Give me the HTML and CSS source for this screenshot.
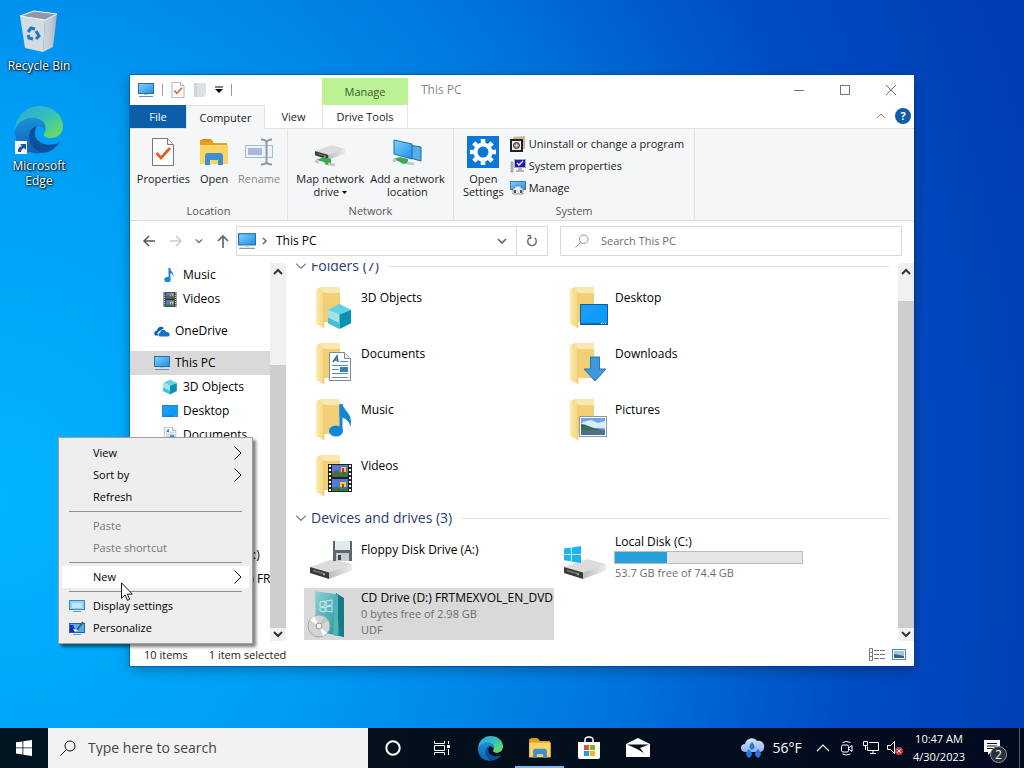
FILE: index.html
```html
<!DOCTYPE html>
<html lang="en">
<head>
    <meta charset="UTF-8">
    <meta name="viewport" content="width=device-width, initial-scale=1.0">
    <title>This PC</title>
    <link rel="stylesheet" href="styles.css">
</head>
<body>
    <!-- shared icons -->
    <svg class="sprite" aria-hidden="true">
        <defs>
            <linearGradient id="g-screen" x1="0" y1="0" x2="1" y2="1">
                <stop offset="0" stop-color="#7fd0ff"/><stop offset="1" stop-color="#1e90e6"/>
            </linearGradient>
            <linearGradient id="g-folder" x1="0" y1="0" x2="1" y2="0">
                <stop offset="0" stop-color="#fdebb0"/><stop offset="1" stop-color="#f6d47c"/>
            </linearGradient>
            <linearGradient id="g-drive" x1="0" y1="0" x2="1" y2="0">
                <stop offset="0" stop-color="#bdbdbd"/><stop offset="1" stop-color="#ececec"/>
            </linearGradient>
            <linearGradient id="g-edge1" x1="0" y1="0" x2="1" y2="1">
                <stop offset="0" stop-color="#2aa5dc"/><stop offset=".5" stop-color="#34c1ba"/><stop offset="1" stop-color="#79e34c"/>
            </linearGradient>
            <linearGradient id="g-edge2" x1="0" y1="0" x2="0" y2="1">
                <stop offset="0" stop-color="#1c8fd8"/><stop offset="1" stop-color="#0b62b4"/>
            </linearGradient>
            <linearGradient id="g-bin" x1="0" y1="0" x2="1" y2="0">
                <stop offset="0" stop-color="#cfd6de"/><stop offset=".6" stop-color="#bfc8d1"/><stop offset="1" stop-color="#a3afbc"/>
            </linearGradient>
            <linearGradient id="g-case" x1="0" y1="0" x2="1" y2="1">
                <stop offset="0" stop-color="#8fd3d6"/><stop offset="1" stop-color="#1f8f98"/>
            </linearGradient>
            <linearGradient id="g-cloud" x1="0" y1="0" x2="0" y2="1">
                <stop offset="0" stop-color="#d6e4fb"/><stop offset="1" stop-color="#8fb1ea"/>
            </linearGradient>
        </defs>
        <symbol id="i-pc" viewBox="0 0 16 16">
            <rect x=".5" y="1.5" width="15" height="10" fill="url(#g-screen)" stroke="#2f6f9f"/>
            <path d="M6 12h4v1H6z" fill="#9fc4dc"/><path d="M1 14.5h14" stroke="#5f95b8"/>
        </symbol>
        <symbol id="i-note" viewBox="0 0 16 16">
            <path d="M7.500 1v10.500" stroke="#1583d8" stroke-width="2"/><ellipse cx="5.500" cy="12.500" rx="3.200" ry="2.600" fill="#1583d8"/>
            <path d="M7 1c1 3 5 3.500 4.500 8.500C11 7 9 6 7 5.500z" fill="#1583d8"/>
        </symbol>
        <symbol id="i-film" viewBox="0 0 24 28">
            <rect width="24" height="28" fill="#222"/>
            <path d="M2 1v26M22 1v26" stroke="#fff" stroke-width="2" stroke-dasharray="2 2"/>
            <path d="M4 1h16v12H4zM4 15h16v12H4z" fill="#5578d8"/>
            <path d="M4 9l5-3 4 3 3-2 4 2v4H4zM4 24l6-1 3 2 7-2v4H4z" fill="#2f7a3c"/>
            <path d="M13 3h5v5h-5zM12 18h6v5h-6z" fill="#f1d21c"/><path d="M14 4h2v6h-2zM6 8h3v3H6zM14 20h2v4h-2z" fill="#c72b3c"/>
        </symbol>
        <symbol id="i-cloud" viewBox="0 0 16 16">
            <path d="M1 12.500C-.8 10 1 7.500 3 7.500 3.500 4 7.500 2.500 9.800 5.200L4.500 8.800c-1.500 1-1 3.200.5 3.700z" fill="#0d62b5"/>
            <path d="M6 13.500c-2-.5-2-3 0-3.800C6.500 6.500 11 5.500 12.300 9c4 0 4.500 4 1.700 4.500z" fill="#1773c9"/>
        </symbol>
        <symbol id="i-cube" viewBox="0 0 26 28">
            <path d="M1 7L13 1l12 6-12 5z" fill="#5fd3e6"/><path d="M1 7l12 5v15L1 21z" fill="#9fe3ee"/><path d="M25 7l-12 5v15l12-6z" fill="#0c91b5"/>
            <path d="M1 15l12 6v6L1 21z" fill="#48bcd4"/>
        </symbol>
        <symbol id="i-desk" viewBox="0 0 28 21">
            <rect x=".5" y=".5" width="27" height="20" fill="#1b9bf3" stroke="#0d5f9c"/><path d="M1 20L20 1h7v19z" fill="#109af8"/>
            <path d="M1 19.500h26" stroke="#0b6fb8"/><path d="M21 19.500h6" stroke="#fff" stroke-dasharray="1 1"/>
        </symbol>
        <symbol id="i-doc" viewBox="0 0 22 29">
            <path d="M.5.500h15l6 6v22H.5z" fill="#fff" stroke="#7d8b95"/><path d="M15.500.500v6h6" fill="#e5eaee" stroke="#7d8b95"/>
            <path d="M4 10l4-6 1 6M5 8h4" fill="none" stroke="#2b6cb0" stroke-width="1.500"/>
            <path d="M11 9.500h8M3 13.500h16M3 17.500h7M3 21.500h16M3 25.500h16" stroke="#4d8fc4"/><path d="M11 15h8v5h-8z" fill="#3d7eb0"/>
        </symbol>
        <symbol id="i-arrow" viewBox="0 0 24 26">
            <path d="M7.500 1h9v12h6.500L12 25 1 13h6.500z" fill="#3f97e0" stroke="#2374b8"/>
        </symbol>
        <symbol id="i-photo" viewBox="0 0 28 21">
            <rect x=".5" y=".5" width="27" height="20" fill="#fff" stroke="#8e979e"/><path d="M2 2h24v17H2z" fill="#6fa4e6"/>
            <path d="M4 6l8-2 7 3 7-2v7H2V8z" fill="#d9ecfa"/><path d="M2 8c6 0 11 5 24 6H2z" fill="#3b6c50"/><path d="M2 14h24v5H2z" fill="#4a6f90"/>
        </symbol>
        <symbol id="i-folder" viewBox="0 0 26 44">
            <path d="M4 3h21v34H7z" fill="#f1cf76"/><path d="M4 2h21v6H8z" fill="#f9e7b2"/><path d="M1 3l8 4v36L1 39z" fill="url(#g-folder)"/><path d="M9 8v35" stroke="#e6c46e" stroke-width=".7"/>
        </symbol>
        <symbol id="i-drive" viewBox="0 0 42 20">
            <path d="M0 8L23 0l19 5-23 9z" fill="#dcdcdc"/><path d="M0 8l19 5.500V20L0 14z" fill="#3a3a3a"/><path d="M19 13.500L42 5v6.500L19 20z" fill="url(#g-drive)"/>
            <path d="M3 11.500l12 3.500" stroke="#777" stroke-width="1.500"/><path d="M13 15.500h2" stroke="#6d6" stroke-width="1.500"/>
        </symbol>
        <symbol id="i-check" viewBox="0 0 22 28">
            <path d="M.5.500h15l6 6v21H.5z" fill="#fff" stroke="#777"/><path d="M15.500.500v6h6" fill="#eee" stroke="#777"/>
            <path d="M4.500 15l4.500 5 9-10" fill="none" stroke="#e0601c" stroke-width="2.800"/>
        </symbol>
        <symbol id="i-explorer" viewBox="0 0 28 26">
            <path d="M0 1h11l3 3h13v21H0z" fill="#e0a21f"/><path d="M0 6h28v19H0z" fill="#fcd462"/><path d="M2 0h9l2 3H2z" fill="#d9941a"/>
            <path d="M5 26v-9q0-3 3-3h12q3 0 3 3v9h-5v-5h-8v5z" fill="#3e8ed0"/>
        </symbol>
        <symbol id="i-edge" viewBox="0 0 48 48">
            <path d="M0 24C1 9 12 0 24 0c14 0 24 9 24 20 0 8-6 12-12 12-5 0-8-2-7-4 3-4 1-13-8-14C11 13 3 18 0 24z" fill="url(#g-edge1)"/>
            <path d="M0 24c3-8 11-13 20-12 9 1 12 8 10 13-1-4-6-6-9-5-9 3-8 22 6 27C11 50-1 38 0 24z" fill="url(#g-edge2)"/>
            <path d="M15 26c-3 9 3 19 13 21 8-1 13-5 17-11-8 5-20 3-24-4-2-4-1-9 1-12-4 1-6 3-7 6z" fill="#0c4f9c"/>
        </symbol>
        <symbol id="i-win" viewBox="0 0 16 16">
            <path d="M0 2.300l6.500-.9v6.100H0zM7.300 1.300L16 0v7.500H7.300zM0 8.300h6.500v6.100L0 13.500zM7.300 8.300H16V16l-8.700-1.200z" fill="currentColor"/>
        </symbol>
        <symbol id="i-lens" viewBox="0 0 16 16">
            <circle cx="10" cy="6" r="5" fill="none" stroke="currentColor"/><path d="M6.500 9.500L.5 15.500" stroke="currentColor"/>
        </symbol>
        <symbol id="i-up" viewBox="0 0 10 10"><path d="M1 7l4-4 4 4" fill="none" stroke="currentColor"/></symbol>
        <symbol id="i-down" viewBox="0 0 10 10"><path d="M1 3l4 4 4-4" fill="none" stroke="currentColor"/></symbol>
        <symbol id="i-right" viewBox="0 0 10 16"><path d="M1.500 1.500L8 8l-6.500 6.500" fill="none" stroke="currentColor"/></symbol>
    </svg>

    <main class="desktop">
        <div class="shortcuts">
            <a class="shortcut" href="#">
                <svg width="40" height="44" viewBox="0 0 40 44">
                    <path d="M1 6L15 1l22 3-11 6z" fill="#8d9aa6"/>
                    <path d="M1 6l25 4-2 32L6 38z" fill="#d3dbe3"/><path d="M26 10L38 4l-4 33-10 5z" fill="url(#g-bin)"/>
                    <path d="M1 6L15 1l23 3-12 6z" fill="none" stroke="#f5f8fb"/>
                    <path d="M9 22l3-4 4 1M17 21l3 5-3 3M14 29l-4-1-1-3" fill="none" stroke="#1d78c4" stroke-width="3"/>
                </svg>
                <span>Recycle Bin</span>
            </a>
            <a class="shortcut" href="#">
                <svg width="48" height="48" viewBox="0 0 48 48">
                    <use href="#i-edge"/>
                    <rect y="35" width="12" height="13" fill="#f8f8f8"/><path d="M3 46c0-4 1-5 4-6l-2-2h6v6l-2-2c-2 1-3 2-3 4z" fill="#23529c"/>
                </svg>
                <span>Microsoft<br>Edge</span>
            </a>
        </div>

        <section class="window">
            <header class="titlebar">
                <div class="quick">
                    <svg width="16" height="16"><use href="#i-pc"/></svg>
                    <i class="bar"></i>
                    <button aria-label="Properties"><svg width="14" height="16"><use href="#i-check"/></svg></button>
                    <button aria-label="New folder"><svg width="14" height="16" viewBox="0 0 14 16"><path d="M1 1h12v11l-2 3H1z" fill="#dde1e6"/><path d="M1 1h3v14H1z" fill="#ccd4dc"/></svg></button>
                    <button aria-label="Customize"><svg width="8" height="8" viewBox="0 0 8 8"><path d="M0 1h8" stroke="#000"/><path d="M0 3h8L4 7z"/></svg></button>
                    <i class="bar"></i>
                </div>
                <div class="manage">Manage</div>
                <h1>This PC</h1>
                <div class="controls">
                    <button aria-label="Minimize"><svg width="12" height="12" viewBox="0 0 12 12"><path d="M1 6.500h10" stroke="currentColor"/></svg></button>
                    <button aria-label="Maximize"><svg width="12" height="12" viewBox="0 0 12 12"><rect x="1.500" y="1.500" width="9" height="9" fill="none" stroke="currentColor"/></svg></button>
                    <button aria-label="Close"><svg width="12" height="12" viewBox="0 0 12 12"><path d="M1 1l10 10M11 1L1 11" stroke="currentColor"/></svg></button>
                </div>
            </header>
            <nav class="tabs">
                <button class="tab file">File</button>
                <button class="tab active">Computer</button>
                <button class="tab view">View</button>
                <button class="tab tools">Drive Tools</button>
                <button class="fold" aria-label="Collapse ribbon"><svg width="10" height="10"><use href="#i-up"/></svg></button>
                <button class="help" aria-label="Help">?</button>
            </nav>

            <div class="ribbon">
                <div class="group location">
                    <div class="tools-row">
                        <button class="big"><svg width="32" height="32" viewBox="0 0 32 32"><use href="#i-check" x="5" y="2" width="22" height="28"/></svg>Properties</button>
                        <button class="big"><svg width="32" height="32" viewBox="0 0 32 32"><use href="#i-explorer" x="2" y="3" width="28" height="26"/></svg>Open</button>
                        <button class="big off"><svg width="32" height="32" viewBox="0 0 32 32">
                            <rect x="2.500" y="9.500" width="27" height="12" fill="#eef2fa" stroke="#a9b9d8"/><path d="M5 12h14v7H5z" fill="#a9b9d8"/>
                            <path d="M18 3.500q5 0 5.500 3 .5-3 5.500-3M23.500 5v21M18 28.500q5 0 5.500-3 .5 3 5.500 3" fill="none" stroke="#8e99aa" stroke-width="2"/></svg>Rename</button>
                    </div>
                    <div class="group-name">Location</div>
                </div>
                <div class="group network">
                    <div class="tools-row">
                        <button class="big"><svg width="32" height="32" viewBox="0 0 32 32"><use href="#i-drive" x="1" y="9" width="30" height="15"/><path d="M2 24l8-3 7 2v5l-5 1-2-3z" fill="#3ea655"/><path d="M1 25l4 1M14 28l7 1" stroke="#c8c8c8" stroke-width="3"/></svg>Map network<br>drive <svg class="caret" width="5" height="3" viewBox="0 0 5 3"><path d="M0 0h5L2.500 3z"/></svg></button>
                        <button class="big"><svg width="32" height="32" viewBox="0 0 32 32">
                            <path d="M12 8l18 3v14l-18-5z" fill="#55aee8" stroke="#1e6ca8"/><path d="M3 4l18 4v15L3 18z" fill="url(#g-screen)" stroke="#1e6ca8"/>
                            <path d="M2 23l7-2 8 2v4l-5 1-3-2z" fill="#3ea655"/><path d="M2 24l3 1M16 27l7 1" stroke="#c8c8c8" stroke-width="3"/></svg>Add a network<br>location</button>
                    </div>
                    <div class="group-name">Network</div>
                </div>
                <div class="group system">
                    <div class="tools-row">
                        <button class="big"><svg width="32" height="32" viewBox="0 0 32 32"><rect width="32" height="32" fill="#0b78d7"/>
                            <g transform="translate(16 16)" fill="none" stroke="#fff"><circle r="7.500" stroke-width="4"/>
                            <path d="M0-9v-4M0 9v4M-9 0h-4M9 0h4M-6.400-6.400l-2.800-2.800M6.400-6.400l2.800-2.800M-6.400 6.400l-2.800 2.800M6.400 6.400l2.800 2.800" stroke-width="4.500"/></g></svg>Open<br>Settings</button>
                        <div class="small-list">
                            <button class="small"><svg width="16" height="16" viewBox="0 0 16 16"><path d="M3 1l12-1v12l-4 3H3z" fill="#cbb78f"/><rect x="1" y="4" width="11" height="11" fill="#eee" stroke="#222" stroke-width="2"/><circle cx="6.500" cy="9.500" r="3" fill="#999" stroke="#333"/><circle cx="6.500" cy="9.500" r="1" fill="#fff"/></svg>Uninstall or change a program</button>
                            <button class="small"><svg width="16" height="16" viewBox="0 0 16 16"><path d="M1 4h2v10H1z" fill="#bbb" stroke="#888" stroke-width=".6"/><rect x="4.500" y="1.500" width="11" height="8" fill="#2019b4" stroke="#aaa"/><path d="M7 5l2 2 4-4" fill="none" stroke="#fff" stroke-width="1.300"/><path d="M8 10h4v2h2v2H6v-2h2z" fill="#b5b5b5"/></svg>System properties</button>
                            <button class="small"><svg width="16" height="16" viewBox="0 0 16 16"><rect x=".5" y="1.500" width="15" height="8" fill="url(#g-screen)" stroke="#3a81b2"/><path d="M5 8V6h6v2h2v6H3V8z" fill="#e4e8ec" stroke="#777" stroke-width=".7"/><path d="M5 10v3M11 10v3" stroke="#222" stroke-width="1.500"/></svg>Manage</button>
                        </div>
                    </div>
                    <div class="group-name">System</div>
                </div>
            </div>

            <div class="address-row">
                <div class="history">
                    <button aria-label="Back"><svg width="14" height="14" viewBox="0 0 14 14"><path d="M13 7H2M7 2L2 7l5 5" fill="none" stroke="#555" stroke-width="1.500"/></svg></button>
                    <button aria-label="Forward" disabled><svg width="14" height="14" viewBox="0 0 14 14"><path d="M1 7h11M7 2l5 5-5 5" fill="none" stroke="#ccc" stroke-width="1.500"/></svg></button>
                    <button aria-label="Recent"><svg width="8" height="8" viewBox="0 0 10 10"><path d="M1 3l4 4 4-4" fill="none" stroke="#777" stroke-width="1.700"/></svg></button>
                    <button aria-label="Up"><svg width="14" height="14" viewBox="0 0 14 14"><path d="M7 14V2M2 7l5-5 5 5" fill="none" stroke="#666" stroke-width="1.700"/></svg></button>
                </div>
                <div class="address">
                    <svg width="18" height="18"><use href="#i-pc"/></svg>
                    <svg width="6" height="8" viewBox="0 0 6 8"><path d="M1 1l3 3-3 3" fill="none" stroke="#666" stroke-width="1.500"/></svg>
                    <button class="crumb">This PC</button>
                    <button class="drop" aria-label="Previous locations"><svg width="10" height="10" viewBox="0 0 10 10"><path d="M1 3l4 4 4-4" fill="none" stroke="#666" stroke-width="1.700"/></svg></button>
                    <button class="refresh" aria-label="Refresh"><svg width="12" height="12" viewBox="0 0 12 12"><path d="M8.500 2.800A4.300 4.300 0 1 1 3.800 2.600" fill="none" stroke="#666" stroke-width="1.400"/><path d="M4.500 .7h-3M4.700.500v3.500" fill="none" stroke="#666" stroke-width="1.300"/></svg></button>
                </div>
                <label class="search"><svg width="14" height="14"><use href="#i-lens"/></svg><input type="text" placeholder="Search This PC" aria-label="Search This PC"></label>
            </div>

            <div class="panes">
                <div class="tree-pane">
                    <ul class="tree">
                        <li class="sub"><svg width="16" height="16"><use href="#i-note"/></svg>Music</li>
                        <li class="sub"><svg width="16" height="15"><use href="#i-film"/></svg>Videos</li>
                        <li class="top"><svg width="16" height="16"><use href="#i-cloud"/></svg>OneDrive</li>
                        <li class="top current"><svg width="16" height="16"><use href="#i-pc"/></svg>This PC</li>
                        <li class="sub"><svg width="16" height="16"><use href="#i-cube"/></svg>3D Objects</li>
                        <li class="sub"><svg width="16" height="12"><use href="#i-desk"/></svg>Desktop</li>
                        <li class="sub"><svg width="16" height="16"><use href="#i-doc"/></svg>Documents</li>
                        <li class="sub"><svg width="16" height="16"><use href="#i-arrow"/></svg>Downloads</li>
                        <li class="sub"><svg width="16" height="16"><use href="#i-note"/></svg>Music</li>
                        <li class="sub"><svg width="16" height="12"><use href="#i-photo"/></svg>Pictures</li>
                        <li class="sub"><svg width="16" height="16"><use href="#i-film"/></svg>Videos</li>
                        <li class="sub"><svg width="16" height="12"><use href="#i-drive"/></svg>Local Disk (C:)</li>
                        <li class="sub"><svg width="16" height="12"><use href="#i-drive"/></svg>CD Drive (D:) FRTMEXVOL_EN_DVD</li>
                    </ul>
                    <div class="scroll scroll-tree"><svg width="10" height="10"><use href="#i-up"/></svg><i></i><svg width="10" height="10"><use href="#i-down"/></svg></div>
                </div>
                <div class="list-pane">
                    <div class="list">
                        <h2><svg width="12" height="12"><use href="#i-down"/></svg>Folders (7)</h2>
                        <div class="items">
                            <div class="item"><svg width="48" height="48" viewBox="0 0 48 48"><use href="#i-folder" x="9" y="3" width="26" height="44"/><use href="#i-cube" x="20" y="21" width="27" height="27"/></svg><div class="name">3D Objects</div></div>
                            <div class="item"><svg width="48" height="48" viewBox="0 0 48 48"><use href="#i-folder" x="9" y="3" width="26" height="44"/><use href="#i-desk" x="20" y="22" width="28" height="21"/></svg><div class="name">Desktop</div></div>
                            <div class="item"><svg width="48" height="48" viewBox="0 0 48 48"><use href="#i-folder" x="9" y="3" width="26" height="44"/><use href="#i-doc" x="23" y="14" width="22" height="29"/></svg><div class="name">Documents</div></div>
                            <div class="item"><svg width="48" height="48" viewBox="0 0 48 48"><use href="#i-folder" x="9" y="3" width="26" height="44"/><use href="#i-arrow" x="23" y="18" width="24" height="26"/></svg><div class="name">Downloads</div></div>
                            <div class="item"><svg width="48" height="48" viewBox="0 0 48 48"><use href="#i-folder" x="9" y="3" width="26" height="44"/><path d="M35 11v26" stroke="#1187d8" stroke-width="3"/><ellipse cx="30" cy="37" rx="7" ry="5.500" fill="#1187d8"/><path d="M33.500 10h3c1 7 11 9 8 23-1-6-5-9-11-10z" fill="#1187d8"/></svg><div class="name">Music</div></div>
                            <div class="item"><svg width="48" height="48" viewBox="0 0 48 48"><use href="#i-folder" x="9" y="3" width="26" height="44"/><use href="#i-photo" x="19" y="22" width="28" height="21"/></svg><div class="name">Pictures</div></div>
                            <div class="item"><svg width="48" height="48" viewBox="0 0 48 48"><use href="#i-folder" x="9" y="3" width="26" height="44"/><use href="#i-film" x="22" y="14" width="24" height="28"/></svg><div class="name">Videos</div></div>
                        </div>
                        <h2><svg width="12" height="12"><use href="#i-down"/></svg>Devices and drives (3)</h2>
                        <div class="items">
                            <div class="item"><svg width="48" height="48" viewBox="0 0 48 48"><use href="#i-drive" x="4" y="25" width="42" height="20"/><path d="M27 7h19v20H27z" fill="#5b666f"/><path d="M29 7h15v9H29z" fill="#dfe9ee"/><path d="M30 19h13v8H30z" fill="#c7ccd0"/><path d="M32 21h3v5h-3z" fill="#444"/></svg><div class="name">Floppy Disk Drive (A:)</div></div>
                            <div class="item wide"><svg width="48" height="48" viewBox="0 0 48 48"><use href="#i-drive" x="4" y="25" width="42" height="20"/><use href="#i-win" x="4" y="12" width="17" height="17" color="#1cb4ee"/></svg>
                                <div class="info">
                                    <div class="name">Local Disk (C:)</div>
                                    <div class="usage"><i style="width: 28%"></i></div>
                                    <div class="note">53.7 GB free of 74.4 GB</div>
                                </div>
                            </div>
                            <div class="item wide selected"><svg width="48" height="48" viewBox="0 0 48 48">
                                <path d="M30 3l8 5v39l-10-2z" fill="#177983"/><path d="M9 1l20 3 5 42-24-5z" fill="url(#g-case)"/><path d="M29 4l3 1v41l-5-1z" fill="#51b3b7"/>
                                <path d="M14 12l5-1v5l-5 1zM20 11l6-1v5l-6 1zM14 18l5-1v5l-5-1zM20 17l6-1v6l-6-1z" fill="none" stroke="#c6ecec"/>
                                <circle cx="13" cy="36" r="11" fill="#d3d5d6" stroke="#a5a8aa"/><path d="M13 36l-9-6 4-4zM13 36l8 7-4 3z" fill="#fff"/><path d="M13 36l9-5-4-4z" fill="#b6cdb9"/><circle cx="13" cy="36" r="3" fill="#f5f5f5" stroke="#999"/></svg>
                                <div class="info">
                                    <div class="name">CD Drive (D:) FRTMEXVOL_EN_DVD</div>
                                    <div class="note">0 bytes free of 2.98 GB</div>
                                    <div class="note">UDF</div>
                                </div>
                            </div>
                        </div>
                    </div>
                    <div class="scroll scroll-list"><svg width="10" height="10"><use href="#i-up"/></svg><i></i><svg width="10" height="10"><use href="#i-down"/></svg></div>
                </div>
            </div>

            <footer class="status">
                <span>10 items</span>
                <span>1 item selected</span>
                <div class="modes">
                    <button aria-label="Details"><svg width="16" height="13" viewBox="0 0 16 13"><path d="M.5.500h3v12h-3zM.5 4.500h3M.5 8.500h3" fill="none" stroke="#777"/><path d="M5 2.500h11M5 6.500h11M5 10.500h11" stroke="#777" stroke-dasharray="5 1"/></svg></button>
                    <button aria-label="Large icons"><svg width="14" height="11" viewBox="0 0 14 11"><rect x=".5" y=".5" width="13" height="10" fill="#fff" stroke="#4a88b5"/><path d="M2 2h10v7H2z" fill="#9cc7e6"/><path d="M2 5l10 2v2H2z" fill="#3b5f78"/></svg></button>
                </div>
            </footer>
        </section>

        <div class="menu">
            <button>View<svg class="more" width="10" height="16"><use href="#i-right"/></svg></button>
            <button>Sort by<svg class="more" width="10" height="16"><use href="#i-right"/></svg></button>
            <button>Refresh</button>
            <hr>
            <button disabled>Paste</button>
            <button disabled>Paste shortcut</button>
            <hr>
            <button class="hover">New<svg class="more" width="10" height="16"><use href="#i-right"/></svg></button>
            <hr>
            <button><svg class="pic" width="16" height="16" viewBox="0 0 16 16"><rect x=".5" y="2.500" width="15" height="9" fill="#8fd0f4" stroke="#3b86b5"/><path d="M3 5h10v5H3z" fill="#bfe6fb"/><path d="M4 13.500h8" stroke="#5c9cc2"/></svg>Display settings</button>
            <button><svg class="pic" width="16" height="16" viewBox="0 0 16 16"><rect x=".5" y="3.500" width="15" height="9" fill="#4bb0ef" stroke="#24629a"/><path d="M1 5h3l3 7H1z" fill="#241cd0"/><path d="M8 10l6-8" fill="none" stroke="#555" stroke-width="2"/><path d="M4 9l5 1-3 2z" fill="#fff"/><path d="M4 14.500h8" stroke="#5c9cc2"/></svg>Personalize</button>
        </div>
        <svg class="pointer" width="12" height="19" viewBox="0 0 12 19"><path d="M.5.800v15.500l3.600-3.400 2.400 5.400 2.200-1-2.400-5.200h5z" fill="#fff" stroke="#000" stroke-width=".9"/></svg>
    </main>

    <footer class="taskbar">
        <button class="start" aria-label="Start"><svg width="16" height="16"><use href="#i-win"/></svg></button>
        <label class="task-search"><svg width="16" height="16"><use href="#i-lens"/></svg><input type="text" placeholder="Type here to search" aria-label="Type here to search"></label>
        <div class="apps">
            <button aria-label="Cortana"><svg width="16" height="16" viewBox="0 0 16 16"><circle cx="8" cy="8" r="6.700" fill="none" stroke="#fff" stroke-width="2"/></svg></button>
            <button aria-label="Task View"><svg width="18" height="16" viewBox="0 0 18 16"><path d="M1.500 1v2.500h10V1M1.500 15v-2.500h10V15M1.500 5.500h10v5h-10zM15.500 1v3M15.500 9v6" fill="none" stroke="#fff"/><path d="M14 5h3v3h-3z" fill="#fff"/></svg></button>
            <button aria-label="Edge"><svg width="25" height="25"><use href="#i-edge"/></svg></button>
            <button class="open" aria-label="File Explorer"><svg width="22" height="20"><use href="#i-explorer"/></svg></button>
            <button aria-label="Store"><svg width="24" height="24" viewBox="0 0 24 24"><path d="M8 6V4q0-3 4-3t4 3v2" fill="none" stroke="#fff" stroke-width="1.500"/><path d="M1 6h22v15q0 2-2 2H3q-2 0-2-2z" fill="#fff"/><path d="M7 9h5v5H7z" fill="#e5502c"/><path d="M13 9h5v5h-5z" fill="#7db61c"/><path d="M7 15h5v5H7z" fill="#1c9fe5"/><path d="M13 15h5v5h-5z" fill="#f5b716"/></svg></button>
            <button aria-label="Mail"><svg width="24" height="20" viewBox="0 0 24 20"><path d="M0 6l12-6 12 6v13H0z" fill="#fff"/><path d="M1 6.500h22L14 10l4 5-7-4z" fill="#04121e"/></svg></button>
        </div>
        <div class="tray">
            <button class="weather"><svg width="26" height="22" viewBox="0 0 26 22"><path d="M5 15C-1 14 0 7 5 7 6 1 14-1 17 4c5-1 8 3 7 7 0 2-2 4-4 4z" fill="url(#g-cloud)"/><path d="M12 5q5 5 0 8-5-3 0-8zM9 12q6 6 0 9-6-3 0-9zM18 12q6 6 0 9-6-3 0-9z" fill="#2678dd"/></svg>56°F</button>
            <button aria-label="Show hidden icons"><svg width="14" height="14" viewBox="0 0 14 14"><path d="M1 10l6-6 6 6" fill="none" stroke="#fff" stroke-width="1.200"/></svg></button>
            <button aria-label="Meet Now"><svg width="14" height="16" viewBox="0 0 14 16"><rect x="1.500" y="5" width="7" height="7" rx="1.500" fill="none" stroke="#fff"/><path d="M8.500 8l3.500-2.500v6L8.500 9M2.500 2.500q4-2 8 0M2.500 14q4 2 8 0" fill="none" stroke="#fff"/></svg></button>
            <button aria-label="Network"><svg width="16" height="16" viewBox="0 0 16 16"><path d="M6 2.500h9.500v8H4.500V6.500M7 13.500h6M10 11v2.500M.5 1.500h4v4h-4zM2.500 6v4" fill="none" stroke="#fff"/></svg></button>
            <button aria-label="Volume"><svg width="16" height="16" viewBox="0 0 16 16"><path d="M.5 5.500h3l4-4v12l-4-4h-3z" fill="none" stroke="#fff"/><circle cx="12" cy="11" r="4" fill="#d4343c"/><path d="M10.200 9.200l3.600 3.600M13.800 9.200l-3.600 3.600" stroke="#fff"/></svg></button>
            <button class="clock">10:47 AM<br>4/30/2023</button>
            <button class="action" aria-label="Notifications"><svg width="18" height="18" viewBox="0 0 18 18"><path d="M0 1h16v12H7l-3 3v-3H0z" fill="#fff"/><path d="M3 4.500h10M3 7h10M3 9.500h6" stroke="#04101f"/></svg><span class="badge">2</span></button>
            <button class="peek" aria-label="Show desktop"></button>
        </div>
    </footer>
</body>
</html>
```
FILE: styles.css
```css
*{
    margin:0;
    padding:0;
    box-sizing:border-box;
}
body{
    height:100vh;
    display:flex;
    flex-direction:column;
    overflow:hidden;
    font:12px/16px "Open Sans", "Noto Sans", sans-serif;
    color:#000;
    background:radial-gradient(ellipse 1080px 1240px at 0 65%, #00b4ff 0, #009ef6 30%, #0076de 58%, #004cc4 80%, #003eb6 100%);
}
button{
    font:inherit;
    color:inherit;
    border:none;
    background:none;
}
input{
    font:inherit;
    border:none;
    outline:none;
    background:none;
    min-width:0;
    flex:1;
}
svg{
    flex:none;
}
.sprite{
    position:absolute;
    width:0;
    height:0;
}

/* desktop */
.desktop{
    flex:1;
    position:relative;
}
.shortcuts{
    width:78px;
    padding-top:10px;
    display:flex;
    flex-direction:column;
    gap:33px;
}
.shortcut{
    display:flex;
    flex-direction:column;
    align-items:center;
    gap:4px;
    color:#fff;
    line-height:15px;
    text-align:center;
    text-decoration:none;
    text-shadow:1px 1px 2px #000, 0 0 2px #000;
}

/* explorer window */
.window{
    position:absolute;
    top:75px;
    right:110px;
    bottom:62px;
    left:130px;
    display:flex;
    flex-direction:column;
    background:#fff;
    box-shadow:0 0 0 1px rgba(0,60,120,.4), 0 4px 12px rgba(0,0,0,.3);
}
.titlebar{
    height:30px;
    display:flex;
}
.quick{
    width:192px;
    padding:0 8px;
    display:flex;
    align-items:center;
    gap:8px;
}
.quick button{
    display:flex;
}
.bar{
    width:1px;
    height:12px;
    background:#999;
}
.manage{
    width:86px;
    margin-top:3px;
    font-size:11px;
    line-height:28px;
    text-align:center;
    background:#bdf294;
    color:#3c5c2c;
}
.titlebar h1{
    padding-left:13px;
    font-size:12px;
    font-weight:normal;
    line-height:30px;
    color:#888;
}
.controls{
    margin-left:auto;
    display:flex;
    color:#777;
}
.controls button{
    width:46px;
    display:flex;
    align-items:center;
    justify-content:center;
}
.tabs{
    height:24px;
    display:flex;
    border-bottom:1px solid #dfe1e3;
    font-size:11px;
    color:#222;
}
.tab{
    line-height:22px;
}
.file{
    width:56px;
    color:#fff;
    background:#0c5ea8;
}
.active{
    width:79px;
    height:24px;
    border:1px solid #dfe1e3;
    border-bottom:none;
    background:#f5f6f7;
}
.view{
    width:57px;
}
.tools{
    width:86px;
    border:1px solid #e0ecd8;
    border-width:0 1px;
}
.fold{
    margin-left:auto;
    width:28px;
    color:#888;
}
.help{
    width:16px;
    height:16px;
    margin:3px 3px 0 0;
    border-radius:50%;
    background:#0c5ea8;
    color:#fff;
    font-weight:bold;
    line-height:16px;
}

/* ribbon */
.ribbon{
    height:92px;
    display:flex;
    background:#f5f6f7;
    border-bottom:1px solid #dadbdc;
    font-size:11px;
    color:#222;
}
.group{
    display:flex;
    flex-direction:column;
    justify-content:space-between;
    padding:7px 0 1px;
    border-right:1px solid #e2e3e4;
}
.location{
    width:158px;
}
.network{
    width:166px;
}
.system{
    width:241px;
}
.tools-row{
    display:flex;
    justify-content:center;
    align-items:flex-start;
}
.big{
    padding:0 4px;
    line-height:13px;
    white-space:nowrap;
}
.big > svg:first-child{
    display:block;
    margin:0 auto 4px;
}
.big .caret{
    display:inline;
    margin-bottom:2px;
}
.network .big,
.system .big{
    padding:0 3px;
}
.off{
    color:#888;
}
.small-list{
    display:flex;
    flex-direction:column;
}
.small{
    height:22px;
    padding:0 4px 6px 3px;
    display:flex;
    align-items:center;
    gap:3px;
    line-height:16px;
    white-space:nowrap;
}
.group-name{
    text-align:center;
    color:#555;
}

/* address row */
.address-row{
    padding:5px 12px 7px 10px;
    display:flex;
}
.history{
    width:96px;
    padding:0 6px 0 2px;
    display:flex;
    align-items:center;
    justify-content:space-between;
}
.history button{
    display:flex;
}
.address{
    flex:1 1 0;
    max-width:312px;
    height:30px;
    display:flex;
    align-items:center;
    gap:6px;
    padding-left:1px;
    border:1px solid #d9d9d9;
}
.crumb{
    margin-left:2px;
}
.drop{
    margin-left:auto;
    width:16px;
}
.refresh{
    width:31px;
    height:28px;
    border-left:1px solid #d9d9d9;
}
.drop svg,
.refresh svg{
    display:block;
    margin:auto;
}
.search{
    flex:1 1 0;
    height:30px;
    margin-left:12px;
    padding-left:14px;
    display:flex;
    align-items:center;
    gap:12px;
    border:1px solid #d9d9d9;
    font-size:11px;
    color:#888;
}
.search input::placeholder{
    color:#6d6d6d;
    opacity:1;
}

/* panes */
.panes{
    flex:1;
    min-height:0;
    display:flex;
}
.tree-pane{
    width:156px;
    display:flex;
    overflow:hidden;
}
.tree{
    flex:1;
    min-width:0;
    overflow:hidden;
    list-style:none;
}
.tree li{
    height:24px;
    display:flex;
    align-items:center;
    gap:5px;
    white-space:nowrap;
}
.sub{
    padding-left:32px;
}
.top{
    padding-left:24px;
}
.tree .top{
    margin-top:8px;
}
.current{
    background:#d9d9d9;
}
.scroll{
    width:16px;
    display:flex;
    flex-direction:column;
    align-items:center;
    padding:4px 0 2px;
    background:#f0f0f0;
    color:#333;
}
.scroll svg{
    stroke-width:2px;
}
.scroll i{
    flex:1;
    width:100%;
    margin:88px 0 1px;
    background:#cdcdcd;
}
.scroll-list i{
    margin-top:24px;
}
.list-pane{
    flex:1;
    min-width:0;
    display:flex;
    overflow:hidden;
}
.list{
    flex:1;
    min-width:0;
    margin-top:-11px;
    padding-right:9px;
}
.list h2{
    height:28px;
    padding-left:9px;
    display:flex;
    align-items:center;
    gap:4px;
    font-size:14px;
    font-weight:normal;
    line-height:28px;
    color:#2b3a78;
}
.list h2 svg{
    color:#777;
}
.list h2::after{
    content:"";
    flex:1;
    height:1px;
    margin-left:5px;
    background:#e2e2e2;
}
.items{
    padding:0 0 4px 18px;
    display:grid;
    grid-template-columns:repeat(auto-fill, 250px);
    gap:4px;
}
.item{
    height:52px;
    padding:2px;
    display:flex;
    gap:7px;
    white-space:nowrap;
}
.item > .name{
    padding-top:8px;
}
.wide .info{
    flex:1;
}
.selected{
    background:#d9d9d9;
}
.note{
    font-size:11px;
    color:#6d6d6d;
}
.usage{
    width:189px;
    height:13px;
    margin:1px 0 1px -1px;
    background:#e6e6e6;
    border:1px solid #bcbcbc;
}
.usage i{
    display:block;
    height:100%;
    background:#26a0da;
}
.status{
    height:25px;
    padding:2px 8px 0 14px;
    display:flex;
    align-items:center;
    gap:21px;
    font-size:11px;
    color:#222;
}
.modes{
    margin-left:auto;
    display:flex;
    gap:7px;
}
.modes button{
    display:flex;
    align-items:center;
}

/* context menu */
.menu{
    position:absolute;
    left:58px;
    top:437px;
    width:195px;
    padding:4px 3px;
    background:#eeeeee;
    border:1px solid #a0a0a0;
    box-shadow:3px 3px 3px rgba(0,0,0,.5);
    font-size:11px;
}
.menu button{
    width:100%;
    height:22px;
    padding:0 6px 0 31px;
    display:flex;
    align-items:center;
    text-align:left;
}
.menu button:disabled{
    color:#777;
}
.menu .hover{
    background:#fff;
}
.menu hr{
    height:1px;
    margin:3px 7px;
    border:none;
    background:#919191;
}
.menu .more{
    margin-left:auto;
}
.menu .pic{
    margin:0 8px 0 -24px;
}
.pointer{
    position:absolute;
    left:121px;
    top:582px;
}

/* taskbar */
.taskbar{
    height:40px;
    display:flex;
    background:linear-gradient(90deg, #02141f, #03101c 50%, #020a20);
    color:#fff;
}
.taskbar button{
    display:flex;
    align-items:center;
    justify-content:center;
}
.start{
    width:48px;
}
.task-search{
    width:320px;
    padding-left:12px;
    display:flex;
    align-items:center;
    gap:12px;
    background:#f2f2f2;
    color:#111;
    font-size:14px;
}
.task-search input::placeholder{
    color:#444;
    opacity:1;
}
.apps{
    display:flex;
}
.apps button{
    width:49px;
}
.apps .open{
    border-bottom:2px solid #7cb8ec;
    padding-top:2px;
}
.tray{
    margin-left:auto;
    display:flex;
}
.tray button{
    width:24px;
}
.tray .weather{
    width:80px;
    gap:6px;
    font-size:14px;
}
.tray .clock{
    width:64px;
    font-size:11px;
    line-height:18px;
}
.tray .action{
    width:48px;
    padding-right:4px;
    position:relative;
}
.badge{
    position:absolute;
    left:19px;
    top:18px;
    width:17px;
    height:17px;
    border:1px solid #999;
    border-radius:50%;
    background:#2a2f38;
    line-height:15px;
}
.tray .peek{
    width:5px;
    border-left:1px solid #56606c;
}
```
